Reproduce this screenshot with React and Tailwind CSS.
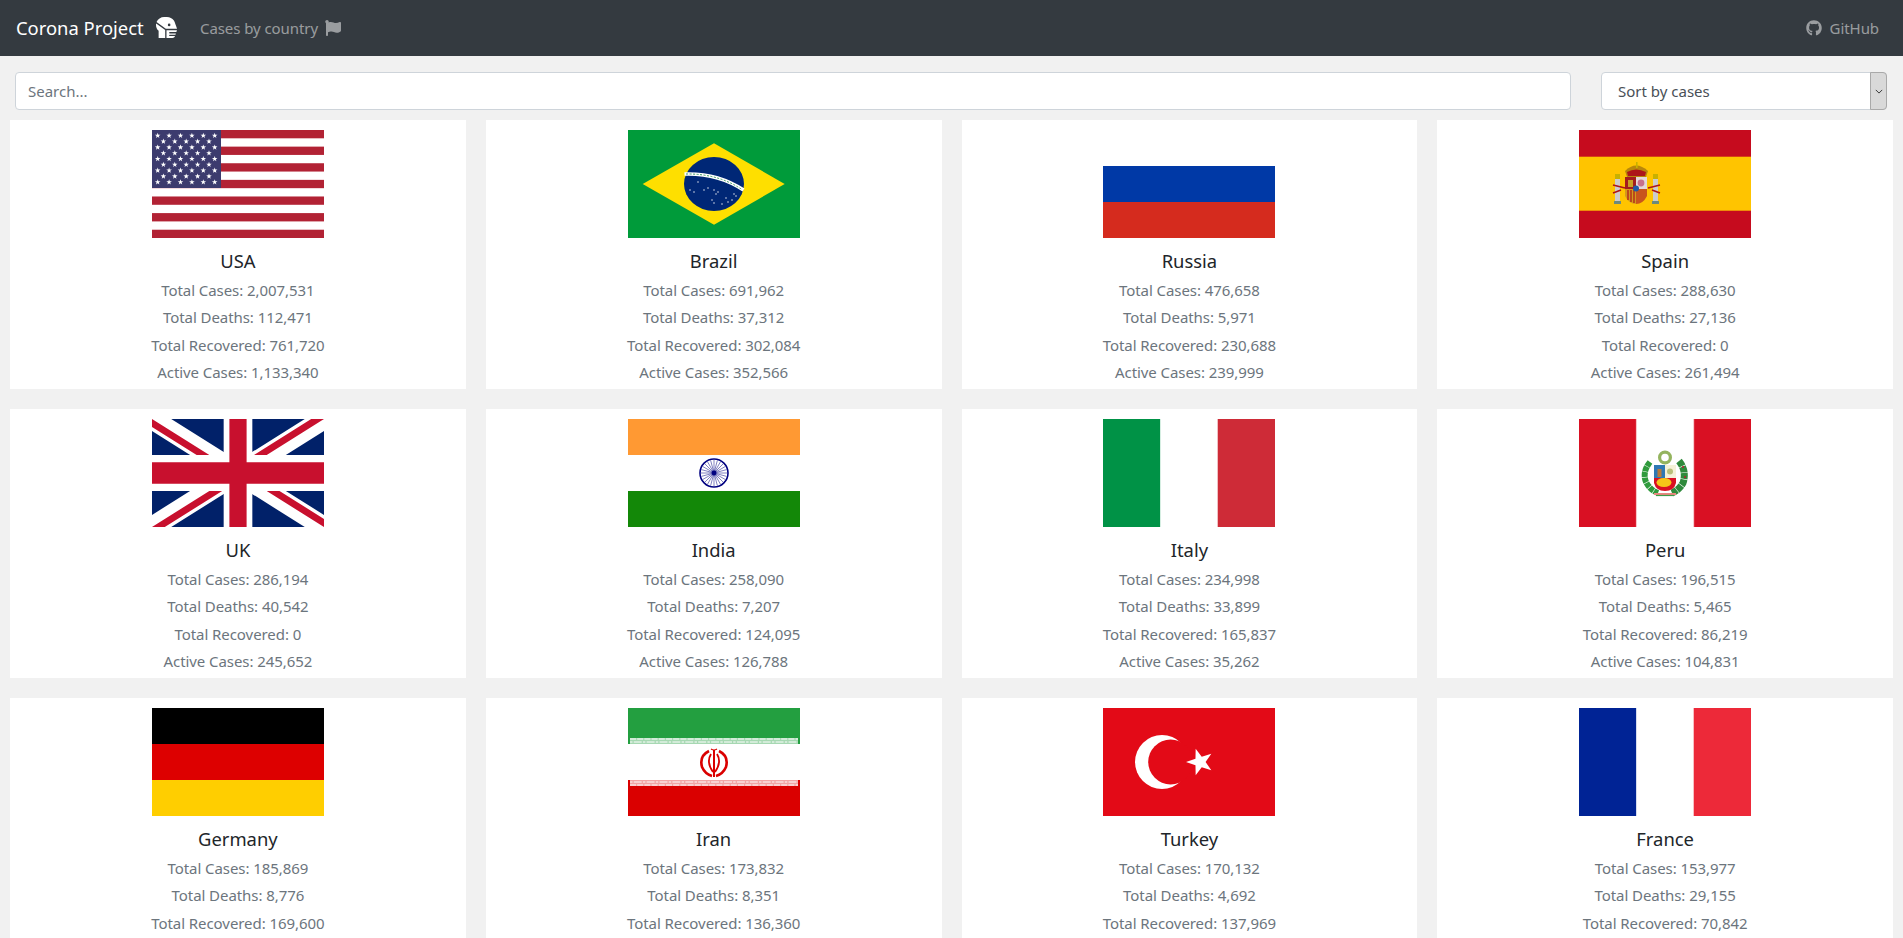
import { FaFlag, FaGithub, FaHeadSideMask } from "react-icons/fa";

const Star = ({ x, y, r, fill = "#fff", rotate = 0 }) => {
  const points = [];
  for (let i = 0; i < 10; i++) {
    const radius = i % 2 === 0 ? r : r * 0.4;
    const angle = ((i * 36 + rotate - 90) * Math.PI) / 180;
    points.push(`${x + radius * Math.cos(angle)},${y + radius * Math.sin(angle)}`);
  }
  return <polygon points={points.join(" ")} fill={fill} />;
};

const FlagBox = ({ children, viewBox = "0 0 172 108" }) => {
  return (
    <svg
      viewBox={viewBox}
      preserveAspectRatio="none"
      className="w-[172px] h-[108px] shrink-0 block"
    >
      {children}
    </svg>
  );
};

const Usa = () => {
  const stars = [];
  for (let row = 0; row < 9; row++) {
    const count = row % 2 === 0 ? 6 : 5;
    for (let col = 0; col < count; col++) {
      stars.push(
        <Star
          key={`${row}-${col}`}
          x={(row % 2 === 0 ? 5.7 : 11.4) + col * 11.4}
          y={5.7 + row * 5.8}
          r={2.9}
        />
      );
    }
  }
  return (
    <FlagBox>
      <rect width="172" height="108" fill="#fff" />
      {[0, 2, 4, 6, 8, 10, 12].map((i) => (
        <rect key={i} y={i * 8.31} width="172" height="8.31" fill="#b22234" />
      ))}
      <rect width="69" height="58" fill="#3c3b6e" />
      {stars}
    </FlagBox>
  );
};

const Brazil = () => {
  const dots = [
    [70, 52], [76, 60], [80, 58], [84, 70], [86, 60], [88, 64], [90, 62], [94, 74],
    [98, 68], [100, 72], [104, 70], [106, 64], [108, 66], [86, 73], [66, 62], [62, 60],
  ];
  return (
    <FlagBox>
      <rect width="172" height="108" fill="#009b3a" />
      <polygon points="14.7,54 86,13.3 156.7,54 86,94.7" fill="#fedf00" />
      <ellipse cx="86" cy="54" rx="30" ry="27" fill="#002776" />
      <path d="M56.5 44 Q90 43 115.5 60" stroke="#fff" strokeWidth="3.6" fill="none" />
      <path d="M58 44 Q90 43.5 114 59.5" stroke="#3d9a63" strokeWidth="1" strokeDasharray="2 1.5" fill="none" />
      {dots.map(([x, y]) => (
        <circle key={`${x}-${y}`} cx={x} cy={y} r="0.7" fill="#fff" />
      ))}
    </FlagBox>
  );
};

const Russia = () => {
  return (
    <FlagBox>
      <rect width="172" height="36" fill="#fff" />
      <rect y="36" width="172" height="36" fill="#0039a6" />
      <rect y="72" width="172" height="36" fill="#d52b1e" />
    </FlagBox>
  );
};

const Spain = () => {
  return (
    <FlagBox>
      <rect width="172" height="108" fill="#c60b1e" />
      <rect y="26.7" width="172" height="54" fill="#ffc400" />
      <path d="M46 41 Q57 30 69 41 L67 47 H48 Z" fill="#b8860b" />
      <path d="M48 42 Q57 37 67 42 L66 46 H49 Z" fill="#ad1519" />
      <rect x="57" y="32" width="1.6" height="6" fill="#c8b100" />
      <rect x="36" y="46" width="5" height="27" fill="#ccc" />
      <rect x="74" y="46" width="5" height="27" fill="#ccc" />
      <rect x="36" y="44" width="5" height="5" fill="#c8b100" />
      <rect x="74" y="44" width="5" height="5" fill="#c8b100" />
      <rect x="35" y="71" width="7" height="3" fill="#6d8a7c" />
      <rect x="73" y="71" width="7" height="3" fill="#6d8a7c" />
      <path d="M34 55 L46 58 M34 63 L42 60 M81 55 L69 58 M81 63 L73 60" stroke="#ad1519" strokeWidth="1.6" />
      <rect x="46" y="47" width="11" height="12" fill="#a31d1d" />
      <rect x="57" y="47" width="11" height="12" fill="#e4d8d8" />
      <path d="M46 59 H57 V74 Q50 74 46 66 Z" fill="#d29a1c" />
      <path d="M57 59 H68 V66 Q64 74 57 74 Z" fill="#c8541d" />
      <rect x="49" y="50" width="5" height="7" fill="#c8a024" />
      <circle cx="62" cy="53" r="3.4" fill="#c7708c" />
      <path d="M49 60 V70 M52 60 V72 M55 60 V73" stroke="#ad1519" strokeWidth="1.2" />
      <circle cx="57" cy="58.5" r="3" fill="#1f5aa8" />
    </FlagBox>
  );
};

const Uk = () => {
  return (
    <FlagBox viewBox="0 0 60 30">
      <clipPath id="uk-t">
        <path d="M30,15 h30 v15 z v15 h-30 z h-30 v-15 z v-15 h30 z" />
      </clipPath>
      <rect width="60" height="30" fill="#012169" />
      <path d="M0,0 L60,30 M60,0 L0,30" stroke="#fff" strokeWidth="6" />
      <path d="M0,0 L60,30 M60,0 L0,30" clipPath="url(#uk-t)" stroke="#c8102e" strokeWidth="4" />
      <path d="M30,0 v30 M0,15 h60" stroke="#fff" strokeWidth="10" />
      <path d="M30,0 v30 M0,15 h60" stroke="#c8102e" strokeWidth="6" />
    </FlagBox>
  );
};

const India = () => {
  const spokes = [];
  for (let i = 0; i < 24; i++) {
    const angle = (i * 15 * Math.PI) / 180;
    spokes.push(
      <line
        key={i}
        x1="86"
        y1="54"
        x2={86 + 13 * Math.cos(angle)}
        y2={54 + 13 * Math.sin(angle)}
        stroke="#000080"
        strokeWidth="0.5"
      />
    );
  }
  return (
    <FlagBox>
      <rect width="172" height="36" fill="#ff9933" />
      <rect y="36" width="172" height="36" fill="#fff" />
      <rect y="72" width="172" height="36" fill="#138808" />
      {spokes}
      <circle cx="86" cy="54" r="14" fill="none" stroke="#000080" strokeWidth="1.6" />
      <circle cx="86" cy="54" r="2.4" fill="#000080" />
    </FlagBox>
  );
};

const Italy = () => {
  return (
    <FlagBox>
      <rect width="57.4" height="108" fill="#009246" />
      <rect x="57.4" width="57.3" height="108" fill="#fff" />
      <rect x="114.7" width="57.3" height="108" fill="#ce2b37" />
    </FlagBox>
  );
};

const Peru = () => {
  return (
    <FlagBox>
      <rect width="172" height="108" fill="#d91023" />
      <rect x="57.4" width="57.3" height="108" fill="#fff" />
      <path d="M57.4 0 V108 M114.7 0 V108" stroke="#fbd5d9" strokeWidth="0.8" />
      <circle cx="86" cy="38.5" r="5.4" fill="none" stroke="#94b45e" strokeWidth="3.2" />
      <path d="M71 43 Q63 53 67 63 Q71 71 79 74" stroke="#2f9a3c" strokeWidth="6" strokeDasharray="5 0.6" fill="none" />
      <path d="M100 42 Q108 52 104 64 Q100 71 93 74" stroke="#2f8a3c" strokeWidth="7" strokeDasharray="6 0.6" fill="none" />
      <circle cx="104" cy="48" r="0.9" fill="#c8102e" />
      <circle cx="106" cy="58" r="0.9" fill="#c8102e" />
      <rect x="75" y="46" width="11" height="13" fill="#2f78b4" />
      <rect x="78.5" y="50" width="4" height="8" fill="#b87a3c" />
      <rect x="86" y="46" width="11" height="13" fill="#f5f1d8" />
      <circle cx="91" cy="52.5" r="3" fill="#b8c07a" />
      <path d="M75 59 H97 V64 Q95 72 86 72 Q77 72 75 64 Z" fill="#d91023" />
      <ellipse cx="85" cy="63.5" rx="7.5" ry="4.6" fill="#f5c518" />
      <path d="M75 75 H97" stroke="#e9877f" strokeWidth="2" />
      <path d="M77 76.5 H95" stroke="#3f9a48" strokeWidth="1.2" />
    </FlagBox>
  );
};

const Germany = () => {
  return (
    <FlagBox>
      <rect width="172" height="36" fill="#000" />
      <rect y="36" width="172" height="36" fill="#dd0000" />
      <rect y="72" width="172" height="36" fill="#ffce00" />
    </FlagBox>
  );
};

const Iran = () => {
  return (
    <FlagBox>
      <rect width="172" height="36" fill="#239f40" />
      <rect y="36" width="172" height="36" fill="#fff" />
      <rect y="72" width="172" height="36" fill="#da0000" />
      <rect x="2" y="30" width="168" height="6" fill="#a6d8b2" />
      <rect x="2" y="72" width="168" height="6" fill="#f1a5a5" />
      <path d="M2 31 H170" stroke="#fff" strokeWidth="1" strokeDasharray="6 1.2" />
      <path d="M2 34 H170" stroke="#fff" strokeWidth="1" strokeDasharray="2.5 1.2 8 1.2" />
      <path d="M2 74 H170" stroke="#fff" strokeWidth="1" strokeDasharray="2.5 1.2 8 1.2" />
      <path d="M2 77 H170" stroke="#fff" strokeWidth="1" strokeDasharray="6 1.2" />
      <g fill="none" stroke="#da0000">
        <path d="M81 43 Q71 48 74 59 Q77 66 84 68" strokeWidth="2.6" />
        <path d="M91 43 Q101 48 98 59 Q95 66 88 68" strokeWidth="2.6" />
        <path d="M83 46 Q78 54 85 64" strokeWidth="1.8" />
        <path d="M89 46 Q94 54 87 64" strokeWidth="1.8" />
        <path d="M86 42 V69" strokeWidth="2" />
        <path d="M83 41 Q86 43 89 41" strokeWidth="1.2" />
      </g>
    </FlagBox>
  );
};

const Turkey = () => {
  return (
    <FlagBox>
      <rect width="172" height="108" fill="#e30a17" />
      <circle cx="59" cy="54" r="27" fill="#fff" />
      <circle cx="67.6" cy="54" r="22.4" fill="#e30a17" />
      <Star x={97} y={54} r={14} rotate={-90} />
    </FlagBox>
  );
};

const France = () => {
  return (
    <FlagBox>
      <rect width="57.4" height="108" fill="#002395" />
      <rect x="57.4" width="57.3" height="108" fill="#fff" />
      <rect x="114.7" width="57.3" height="108" fill="#ed2939" />
    </FlagBox>
  );
};

const countries = [
  { name: "USA", flag: Usa, cases: "2,007,531", deaths: "112,471", recovered: "761,720", active: "1,133,340" },
  { name: "Brazil", flag: Brazil, cases: "691,962", deaths: "37,312", recovered: "302,084", active: "352,566" },
  { name: "Russia", flag: Russia, cases: "476,658", deaths: "5,971", recovered: "230,688", active: "239,999" },
  { name: "Spain", flag: Spain, cases: "288,630", deaths: "27,136", recovered: "0", active: "261,494" },
  { name: "UK", flag: Uk, cases: "286,194", deaths: "40,542", recovered: "0", active: "245,652" },
  { name: "India", flag: India, cases: "258,090", deaths: "7,207", recovered: "124,095", active: "126,788" },
  { name: "Italy", flag: Italy, cases: "234,998", deaths: "33,899", recovered: "165,837", active: "35,262" },
  { name: "Peru", flag: Peru, cases: "196,515", deaths: "5,465", recovered: "86,219", active: "104,831" },
  { name: "Germany", flag: Germany, cases: "185,869", deaths: "8,776", recovered: "169,600", active: "7,493" },
  { name: "Iran", flag: Iran, cases: "173,832", deaths: "8,351", recovered: "136,360", active: "29,121" },
  { name: "Turkey", flag: Turkey, cases: "170,132", deaths: "4,692", recovered: "137,969", active: "27,471" },
  { name: "France", flag: France, cases: "153,977", deaths: "29,155", recovered: "70,842", active: "53,980" },
];

const CountryCard = (props) => {
  const { name, flag: Flag, cases, deaths, recovered, active } = props;

  return (
    <div className="h-[269px] bg-white pt-[10px] flex flex-col items-center">
      <Flag />
      <h5 className="mt-[11px] text-[18.4px] leading-[24px] text-[#212529]">{name}</h5>
      <div className="mt-[4px] text-center text-[15px] tracking-[-0.07px] leading-[27.4px] text-[#6c757d]">
        <p>Total Cases: {cases}</p>
        <p>Total Deaths: {deaths}</p>
        <p>Total Recovered: {recovered}</p>
        <p>Active Cases: {active}</p>
      </div>
    </div>
  );
};

const App = () => {
  return (
    <div className="h-screen overflow-hidden bg-[#f1f1f1] font-['Noto_Sans',sans-serif]">
      <nav className="h-[56px] bg-[#343a40] px-4 flex items-center justify-between">
        <div className="flex items-center">
          <a className="w-[161px] flex items-center justify-between text-[18.4px] text-white">
            Corona Project
            <FaHeadSideMask className="w-[21px] h-[21px]" />
          </a>
          <a className="ml-[23px] w-[141px] flex items-center justify-between text-[15px] tracking-[-0.07px] text-white/50">
            Cases by country
            <FaFlag className="w-4 h-4" />
          </a>
        </div>
        <a className="mr-2 flex items-center gap-[8px] text-[15px] tracking-[-0.07px] text-white/50">
          <FaGithub className="w-4 h-4" />
          GitHub
        </a>
      </nav>

      <div className="pt-[16px] pl-[15px] pr-[16px] flex gap-[30px]">
        <input
          type="text"
          placeholder="Search..."
          className="flex-1 h-[38px] px-3 bg-white border border-[#ced4da] rounded-[4px] text-[15px] text-[#495057] placeholder:text-[#6c757d] outline-none"
        />
        <div className="relative w-[286px] h-[38px]">
          <select className="w-full h-full pl-4 pr-6 bg-white border border-[#ced4da] rounded-[4px] text-[15px] text-[#495057] appearance-none outline-none">
            <option>Sort by cases</option>
          </select>
          <div className="absolute top-0 right-0 w-[17px] h-[38px] flex items-center justify-center bg-[#d9d9d9] border border-[#a9a9a9] rounded-r-[4px]">
            <svg viewBox="0 0 10 6" className="w-[8px] h-[5px]">
              <path d="M1 1 L5 5 L9 1" fill="none" stroke="#333" strokeWidth="1.2" />
            </svg>
          </div>
        </div>
      </div>

      <div className="mt-[10px] px-[10px] grid grid-cols-4 gap-[20px]">
        {countries.map((item) => {
          return <CountryCard key={item.name} {...item} />;
        })}
      </div>
    </div>
  );
};

export default App;
